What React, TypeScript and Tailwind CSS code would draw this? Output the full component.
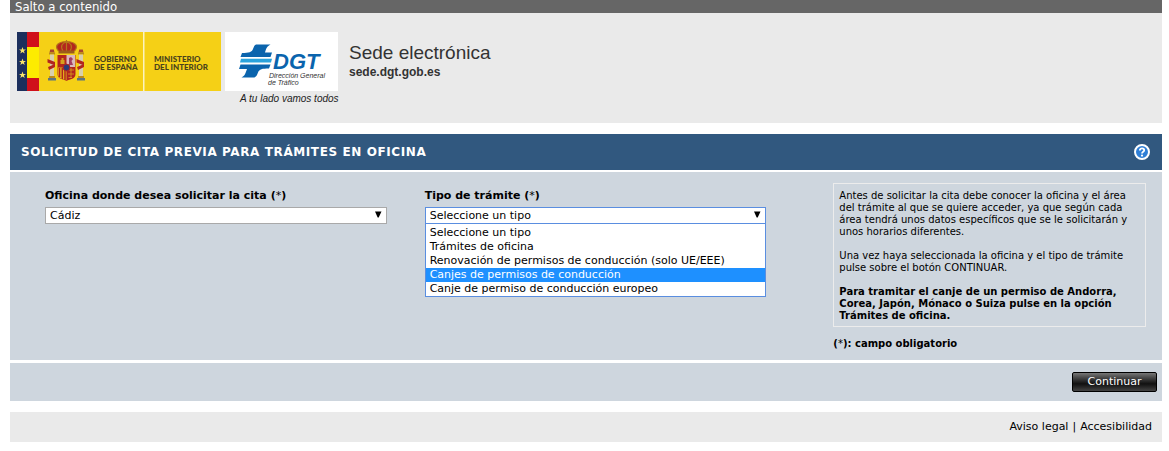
import { useState } from 'react';

const offices = ['Cádiz', 'Jerez de la Frontera', 'Algeciras'];

const procedures = [
  'Seleccione un tipo',
  'Trámites de oficina',
  'Renovación de permisos de conducción (solo UE/EEE)',
  'Canjes de permisos de conducción',
  'Canje de permiso de conducción europeo',
];

function Star({ y }: { y: number }) {
  return (
    <path
      transform={`translate(5.5 ${y})`}
      fill="#f8e56a"
      d="M0-3.6 .9-1.1 3.5-1.1 1.4.5 2.2 3 0 1.5-2.2 3-1.4.5-3.5-1.1-.9-1.1Z"
    />
  );
}

function Pillar({ x }: { x: number }) {
  return (
    <g transform={`translate(${x} 0)`}>
      <path d="M.5 20.500 1.200 17.500H4.800L5.500 20.500Z" fill="#a8432e" />
      <rect x="0" y="20.500" width="6" height="2" fill="#b98a1c" />
      <rect x="1" y="22.500" width="4" height="22" fill="#d9cfae" />
      <path d="M-1.500 27 6 30V33.500L-1.500 30.500Z M-1 35 6 32V35L0 38Z" fill="#b3261e" />
      <rect x="0" y="44" width="6" height="2" fill="#b98a1c" />
      <rect x="-1" y="46" width="8" height="2.500" fill="#5d7480" />
    </g>
  );
}

function GovernmentLogo() {
  return (
    <svg
      viewBox="0 0 204 59"
      className="h-[59px] w-[204px] shrink-0"
      role="img"
      aria-label="Gobierno de España, Ministerio del Interior"
    >
      <rect width="204" height="59" fill="#f5d016" />
      <rect width="10" height="59" fill="#1c2f5c" />
      <rect x="10" width="12" height="59" fill="#d0101b" />
      <rect x="10" y="15" width="12" height="31" fill="#fdec00" />
      <Star y={18.5} />
      <Star y={30} />
      <Star y={43} />
      <rect x="126" width="1.500" height="59" fill="#fbf3c0" />

      {/* Coat of arms */}
      <Pillar x={32} />
      <Pillar x={61} />
      <path d="M41.500 19C36 13 43 9.500 49.500 9.500S63 13 57.500 19Z" fill="#b3261e" />
      <path
        d="M41.500 19C36 13 43 9.500 49.500 9.500S63 13 57.500 19M46 19C43 14 45 11 49.500 10M53 19C56 14 54 11 49.500 10M49.500 19V8"
        fill="none"
        stroke="#b5761a"
        strokeWidth="1.200"
      />
      <rect x="41.500" y="18.500" width="16" height="3" fill="#9c5a1c" />
      <path d="M40.500 23H58.500V42C58.500 47 53 47 49.500 49 46 47 40.500 47 40.500 42Z" fill="#b3261e" />
      <path d="M49.500 23H58V35H49.500Z" fill="#d9b9bd" />
      <path d="M52 33V26L54 25 56 27 54.500 29 56 33Z" fill="#a33b62" />
      <path d="M43.500 32V28H44.500V26H46.500V28H47.500V32Z" fill="#d8a11c" />
      <path d="M41 35.500H49.500V48.500C46 47 41 47 41 42Z" fill="#e3b51b" />
      <path d="M42.500 36V45M45.300 36V47M48 36V48" stroke="#b3261e" strokeWidth="1.500" />
      <path d="M51 38H57M51 42H57M51.500 45.500H55M54 36V46" stroke="#d8a11c" strokeWidth=".8" />
      <circle cx="49.500" cy="35.500" r="3.400" fill="#2b3a78" stroke="#b3261e" />

      <g fontFamily="Lato, 'Liberation Sans', sans-serif" fontWeight="900" fontSize="8" fill="#4a431c">
        <text x="77" y="30">GOBIERNO</text>
        <text x="77" y="38">DE ESPAÑA</text>
        <text x="137" y="30">MINISTERIO</text>
        <text x="137" y="38">DEL INTERIOR</text>
      </g>
    </svg>
  );
}

function DgtLogo() {
  return (
    <svg
      viewBox="0 0 116 75"
      className="h-[75px] w-[116px] shrink-0"
      role="img"
      aria-label="DGT, Dirección General de Tráfico"
    >
      <rect width="113" height="59" fill="#fff" />
      <path d="M31 12.500H45.500C42 14 41 17 40 20.500H47L45.500 25H15.500L17 21C24 21 27 20 28 17 29 14.500 29 13.500 31 12.500Z" fill="#0a64ad" />
      <path d="M16 26.800H47L46 30.500H15Z" fill="#2ba3dc" />
      <path d="M15.500 32.500H45.500L44 36.500C37 36.500 34.500 37 33 40.500 32 43 31.500 45 29 45.500H16.500C20 44 20.500 41 22 37H14Z" fill="#0a64ad" />
      <g fontFamily="'Liberation Sans', Arial, sans-serif" fontStyle="italic">
        <text x="48" y="37" fontWeight="700" fontSize="22" fill="#0a64ad">
          DGT
        </text>
        <text x="44" y="46" fontSize="7" fill="#333">Dirección General</text>
        <text x="43" y="53" fontSize="7" fill="#333">de Tráfico</text>
        <text x="15" y="70" fontSize="10" fill="#222">A tu lado vamos todos</text>
      </g>
    </svg>
  );
}

function HelpIcon() {
  return (
    <svg viewBox="0 0 16 16" className="size-4" aria-hidden="true">
      <circle cx="8" cy="8" r="7" fill="#2f7fd6" stroke="#fff" strokeWidth="2" />
      <path d="M5.800 6.400C5.800 3.600 10.200 3.800 10.200 6.200 10.200 7.800 8 7.600 8 9.400" fill="none" stroke="#fff" strokeWidth="1.800" />
      <circle cx="8" cy="11.600" r="1.100" fill="#fff" />
    </svg>
  );
}

function Arrow() {
  return (
    <svg viewBox="0 0 8 7" className="pointer-events-none absolute top-1 right-[5px] h-[7px] w-2" aria-hidden="true">
      <path d="M1 0.500H7.500L4.700 6.500H3.700Z" fill="#000" />
    </svg>
  );
}

function Required() {
  return (
    <>
      (<span className="font-normal">*</span>)
    </>
  );
}

interface SelectFieldProps {
  id: string;
  label: string;
  options: string[];
  open?: boolean;
}

function SelectField({ id, label, options, open = false }: SelectFieldProps) {
  const [value, setValue] = useState(options[0]);
  const [expanded, setExpanded] = useState(open);
  const active = 3;

  return (
    <div className="min-w-0 pt-4">
      <label htmlFor={id} className="block text-[11px] leading-[15px] font-bold">
        {label} <Required />
      </label>
      <div className="relative mt-1">
        <select
          id={id}
          value={value}
          onChange={(e) => setValue(e.target.value)}
          className={
            expanded
              ? 'block h-[17px] w-full appearance-none border border-[#5a8ee0] bg-white px-1 text-[11px] leading-[15px] outline-none'
              : 'block h-[17px] w-full appearance-none border border-[#a9a9a9] bg-white px-1 text-[11px] leading-[15px] outline-none'
          }
        >
          {options.map((option) => (
            <option key={option}>{option}</option>
          ))}
        </select>
        <Arrow />
        {expanded && (
          <ul
            role="listbox"
            aria-label={label}
            className="absolute inset-x-0 top-full border border-t-0 border-[#5a8ee0] bg-white pt-0.5 text-[11px] leading-[14px]"
          >
            {options.map((option, i) => (
              <li
                key={option}
                role="option"
                aria-selected={i === active}
                onClick={() => {
                  setValue(option);
                  setExpanded(false);
                }}
                className={i === active ? 'bg-[#1e90ff] px-1 text-white' : 'px-1'}
              >
                {option}
              </li>
            ))}
          </ul>
        )}
      </div>
    </div>
  );
}

export default function App() {
  return (
    <div className="mr-[7px] ml-[10px] font-['DejaVu_Sans',Verdana,sans-serif] text-black">
      <div className="h-[13px] bg-[#666]">
        <a href="#contenido" className="block px-[5px] font-['DejaVu_Sans_Condensed','Noto_Sans',Tahoma,sans-serif] text-[13px] leading-[13px] text-white">
          Salto a contenido
        </a>
      </div>

      <header className="flex h-[110px] items-start bg-[#eaeaea] pt-[19px] pl-[7px]">
        <GovernmentLogo />
        <div className="ml-1">
          <DgtLogo />
        </div>
        <div className="mt-2 ml-2 font-['Liberation_Sans',Arial,sans-serif] text-[#333]">
          <p className="text-[19px] leading-[25px]">Sede electrónica</p>
          <p className="text-xs leading-[14px] font-bold">sede.dgt.gob.es</p>
        </div>
      </header>

      <main id="contenido" className="mt-[11px]">
        <div className="flex h-9 items-center justify-between bg-[#31587f] pr-3 pl-[11px]">
          <h1 className="text-xs font-bold tracking-wider text-white">
            SOLICITUD DE CITA PREVIA PARA TRÁMITES EN OFICINA
          </h1>
          <button type="button" aria-label="Ayuda">
            <HelpIcon />
          </button>
        </div>

        <form onSubmit={(e) => e.preventDefault()}>
          <div className="mt-0.5 grid grid-cols-3 gap-[38px] bg-[#ced6de] pr-4 pb-[10px] pl-[35px]">
            <SelectField id="oficina" label="Oficina donde desea solicitar la cita" options={offices} />
            <SelectField id="tramite" label="Tipo de trámite" options={procedures} open />
            <div className="ml-[29px] pt-[11px] text-[10px] leading-3">
              <div className="flex flex-col gap-3 border border-[#ececec] px-[5px] pt-1.5 pb-1">
                <p>
                  Antes de solicitar la cita debe conocer la oficina y el área del trámite al que se quiere acceder, ya
                  que según cada área tendrá unos datos específicos que se le solicitarán y unos horarios diferentes.
                </p>
                <p>Una vez haya seleccionada la oficina y el tipo de trámite pulse sobre el botón CONTINUAR.</p>
                <p className="font-bold">
                  Para tramitar el canje de un permiso de Andorra, Corea, Japón, Mónaco o Suiza pulse en la opción
                  Trámites de oficina.
                </p>
              </div>
              <p className="mt-[11px] font-bold">
                <Required />: campo obligatorio
              </p>
            </div>
          </div>

          <div className="mt-[3px] flex h-[38px] items-center justify-end bg-[#ced6de] pr-[5px]">
            <button
              type="submit"
              className="h-5 w-[85px] rounded-xs border border-black bg-linear-to-b from-[#777] via-[#111] via-60% to-[#444] text-[11px] leading-[18px] text-white"
            >
              Continuar
            </button>
          </div>
        </form>
      </main>

      <footer className="mt-[11px] flex h-[30px] items-center justify-end gap-1 bg-[#eaeaea] pr-[10px] text-[11px]">
        <a href="#aviso">Aviso legal</a>
        <span>|</span>
        <a href="#accesibilidad">Accesibilidad</a>
      </footer>
    </div>
  );
}
